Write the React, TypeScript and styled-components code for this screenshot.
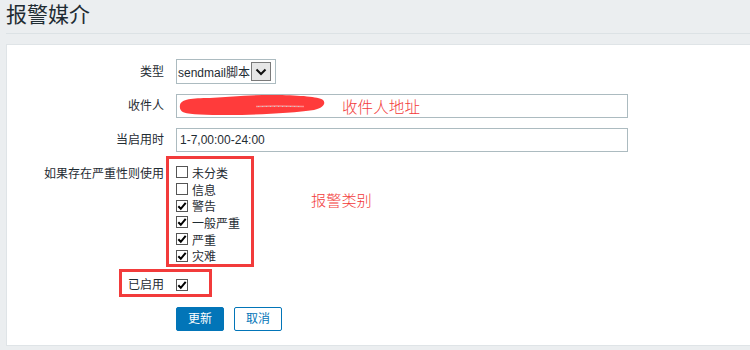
import React from "react";
import styled, { createGlobalStyle } from "styled-components";

const Global = createGlobalStyle`
  html, body { margin: 0; padding: 0; background: #ebeef0; }
  body {
    width: 750px;
    height: 350px;
    overflow: hidden;
    font-family: "Liberation Sans", Arial, "Noto Sans CJK SC", sans-serif;
    font-size: 12px;
    color: #1f2c33;
  }
`;

const RED = "#f23b3b";

const Page = styled.div`
  padding-left: 6px;
`;

const Header = styled.header`
  height: 33px;
  border-bottom: 1px solid #dce2e5;
  display: flex;
  align-items: center;
`;

const Title = styled.h1`
  margin: 0 0 3px 0;
  font-size: 21px;
  font-weight: 400;
  line-height: 28px;
  color: #1f2c33;
  font-family: "Liberation Sans", "Noto Sans CJK SC", sans-serif;
`;

const Panel = styled.div`
  margin-top: 10px;
  background: #fff;
  border: 1px solid #dfe4e7;
  border-right: none;
  padding: 14px 0 14px;
`;

const Row = styled.div<{ $mt?: number; $align?: string; $h?: number; $pt?: number }>`
  position: relative;
  display: flex;
  align-items: ${(p) => p.$align ?? "center"};
  margin-top: ${(p) => p.$mt ?? 0}px;
  ${(p) => (p.$h ? `height: ${p.$h}px; box-sizing: border-box;` : "")}
  ${(p) => (p.$pt ? `padding-top: ${p.$pt}px;` : "")}
`;

const Label = styled.label<{ $mt?: number }>`
  flex: none;
  width: 157px;
  margin-right: 12px;
  text-align: right;
  line-height: 14px;
  margin-top: ${(p) => p.$mt ?? 0}px;
  white-space: nowrap;
`;

const SelectBox = styled.div`
  width: 100px;
  height: 25px;
  box-sizing: border-box;
  border: 1px solid #acbbc0;
  display: flex;
  align-items: center;
  justify-content: space-between;
  padding: 0 4px 0 1px;
  background: #fff;
  white-space: nowrap;
`;

const SelectArrow = styled.span`
  width: 20px;
  height: 19px;
  box-sizing: border-box;
  border: 1px solid #7a7a7a;
  background: #e6e6e6;
  display: flex;
  align-items: center;
  justify-content: center;
`;

const InputWrap = styled.div`
  position: relative;
  width: 452px;
`;

const TextInput = styled.input`
  display: block;
  width: 452px;
  height: 24px;
  box-sizing: border-box;
  border: 1px solid #acbbc0;
  padding: 0 3px;
  margin: 0;
  font-family: "Liberation Sans", Arial, "Noto Sans CJK SC", sans-serif;
  font-size: 12px;
  color: #1f2c33;
  background: #fff;
  outline: none;
`;

const Scribble = styled.svg`
  position: absolute;
  left: 2px;
  top: 0;
  pointer-events: none;
`;

const Note = styled.span<{ $size: number }>`
  color: ${RED};
  font-family: "Noto Sans CJK SC", sans-serif;
  font-size: ${(p) => p.$size}px;
  font-weight: 300;
  line-height: 20px;
  white-space: nowrap;
`;

const InputNote = styled(Note)`
  position: absolute;
  left: 166px;
  top: 50%;
  transform: translateY(-50%);
`;

const SideNote = styled(Note)`
  margin-left: 57px;
  margin-top: 33px;
`;

const CheckGroup = styled.div`
  margin-left: -10px;
  width: 88px;
  box-sizing: border-box;
  border: 3px solid ${RED};
  padding: 5px 0 0 7px;
`;

const CheckItem = styled.div`
  display: flex;
  align-items: center;
  height: 16.7px;
  gap: 4px;
  white-space: nowrap;
`;

const Box = styled.span`
  flex: none;
  width: 12px;
  height: 12px;
  box-sizing: border-box;
  border: 1px solid #555;
  background: #fff;
  display: flex;
  align-items: center;
  justify-content: center;
`;

const Highlight = styled.div`
  position: absolute;
  left: 112px;
  top: 0;
  width: 93px;
  height: 28px;
  box-sizing: border-box;
  border: 3px solid ${RED};
  pointer-events: none;
`;

const Buttons = styled.div`
  display: flex;
  gap: 10px;
`;

const Button = styled.button<{ $primary?: boolean }>`
  height: 24px;
  padding: 0 11px;
  margin: 0;
  border: 1px solid #0275b8;
  border-radius: 2px;
  background: ${(p) => (p.$primary ? "#0275b8" : "#fff")};
  color: ${(p) => (p.$primary ? "#fff" : "#0275b8")};
  font-family: "Liberation Sans", Arial, "Noto Sans CJK SC", sans-serif;
  font-size: 12px;
  line-height: 22px;
  cursor: pointer;
`;

function Check({ checked }: { checked: boolean }) {
  return (
    <Box>
      {checked && (
        <svg width="10" height="10" viewBox="0 0 10 10">
          <path d="M1.3 5.2 L3.8 7.8 L8.7 1.8" fill="none" stroke="#000" strokeWidth="2" />
        </svg>
      )}
    </Box>
  );
}

const severities: { name: string; on: boolean }[] = [
  { name: "未分类", on: false },
  { name: "信息", on: false },
  { name: "警告", on: true },
  { name: "一般严重", on: true },
  { name: "严重", on: true },
  { name: "灾难", on: true },
];

export default function App() {
  return (
    <>
      <Global />
      <Page>
        <Header>
          <Title>报警媒介</Title>
        </Header>
        <Panel>
          <Row>
            <Label>类型</Label>
            <SelectBox>
              <span>sendmail脚本</span>
              <SelectArrow>
                <svg width="12" height="8" viewBox="0 0 12 8">
                  <path d="M1.5 1.5 L6 6 L10.5 1.5" fill="none" stroke="#111" strokeWidth="2" />
                </svg>
              </SelectArrow>
            </SelectBox>
          </Row>

          <Row $mt={10}>
            <Label>收件人</Label>
            <InputWrap>
              <TextInput readOnly value="" />
              <Scribble width="150" height="24" viewBox="0 0 150 24">
                <path
                  d="M2 11 C3 5 14 4 32 4 C55 3 75 0.5 100 1 C122 1.5 140 2.5 145 6 C148 9 146 14 136 16 C115 19 80 21 50 21 C28 21 12 20.5 6 18.5 C2 17 1.5 14 2 11 Z"
                  fill="#ff3b3b"
                />
                <path d="M78 12.5 C95 11.5 112 12 126 12.5" fill="none" stroke="#ff8a8a" strokeWidth="1.5" />
                <path d="M80 12.5 L124 12.5" fill="none" stroke="#c9c9c9" strokeWidth="1" strokeDasharray="1 3" />
              </Scribble>
              <InputNote $size={15.6}>收件人地址</InputNote>
            </InputWrap>
          </Row>

          <Row $mt={10}>
            <Label>当启用时</Label>
            <TextInput readOnly value="1-7,00:00-24:00" />
          </Row>

          <Row $mt={4} $align="flex-start">
            <Label $mt={11}>如果存在严重性则使用</Label>
            <CheckGroup>
              {severities.map((s) => (
                <CheckItem key={s.name}>
                  <Check checked={s.on} />
                  <span>{s.name}</span>
                </CheckItem>
              ))}
            </CheckGroup>
            <SideNote $size={15.2}>报警类别</SideNote>
          </Row>

          <Row $mt={2} $h={28} $pt={3}>
            <Label>已启用</Label>
            <Check checked />
            <Highlight />
          </Row>

          <Row $mt={10}>
            <Label />
            <Buttons>
              <Button $primary>更新</Button>
              <Button>取消</Button>
            </Buttons>
          </Row>
        </Panel>
      </Page>
    </>
  );
}
